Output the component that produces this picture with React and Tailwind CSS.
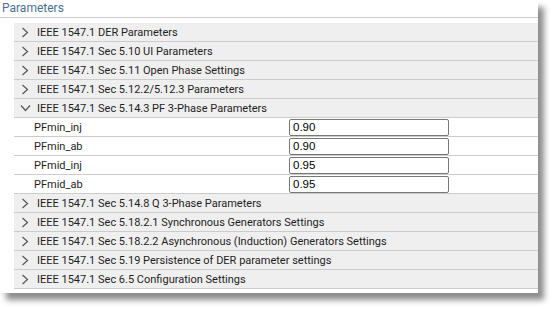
import React from "react";

const before = [
  "IEEE 1547.1 DER Parameters",
  "IEEE 1547.1 Sec 5.10 UI Parameters",
  "IEEE 1547.1 Sec 5.11 Open Phase Settings",
  "IEEE 1547.1 Sec 5.12.2/5.12.3 Parameters",
];
const after = [
  "IEEE 1547.1 Sec 5.14.8 Q 3-Phase Parameters",
  "IEEE 1547.1 Sec 5.18.2.1 Synchronous Generators Settings",
  "IEEE 1547.1 Sec 5.18.2.2 Asynchronous (Induction) Generators Settings",
  "IEEE 1547.1 Sec 5.19 Persistence of DER parameter settings",
  "IEEE 1547.1 Sec 6.5 Configuration Settings",
];
const params = [
  ["PFmin_inj", "0.90"],
  ["PFmin_ab", "0.90"],
  ["PFmid_inj", "0.95"],
  ["PFmid_ab", "0.95"],
];

function ChevronRight() {
  return (
    <svg width="8" height="11" viewBox="0 0 8 11" className="shrink-0">
      <path d="M1.5 1 L6.5 5.5 L1.5 10" fill="none" stroke="#555" strokeWidth="1.2" />
    </svg>
  );
}
function ChevronDown() {
  return (
    <svg width="11" height="8" viewBox="0 0 11 8" className="shrink-0">
      <path d="M1 1.5 L5.5 6.5 L10 1.5" fill="none" stroke="#555" strokeWidth="1.2" />
    </svg>
  );
}

function Header({ title, open }) {
  return (
    <div className="flex h-[19px] items-center border-b border-[#cccccc] bg-[#efefef] text-[11px] text-[#1e1e1e]">
      {open ? (
        <div className="ml-[6px] mr-[6px] flex w-[11px] justify-center">
          <ChevronDown />
        </div>
      ) : (
        <div className="ml-[7px] mr-[8px] flex w-[8px] justify-center">
          <ChevronRight />
        </div>
      )}
      <span className="whitespace-nowrap leading-none">{title}</span>
    </div>
  );
}

export default function App() {
  return (
    <div className="h-[309px] w-[554px] bg-white" style={{ fontFamily: "Roboto, 'Liberation Sans', sans-serif" }}>
      <div className="h-[293px] w-[538px] bg-white shadow-[6px_7px_6px_rgba(0,0,0,0.45)]">
        <div className="h-[18px] border-b border-[#cccccc] pl-[2px] pt-[1px] text-[12px] leading-[14px] text-[#4b6f94]">
          Parameters
        </div>
        <div className="ml-[14px] mt-[5px]">
          {before.map((t) => (
            <Header key={t} title={t} />
          ))}
          <Header title="IEEE 1547.1 Sec 5.14.3 PF 3-Phase Parameters" open />
          {params.map(([k, v]) => (
            <div key={k} className="flex h-[19px] items-center border-b border-[#cccccc] bg-white">
              <span className="w-[275px] shrink-0 pl-[20px] text-[11px] leading-none text-[#1e1e1e]">{k}</span>
              <input
                readOnly
                value={v}
                className="h-[17px] w-[160px] rounded-[2px] border border-[#777777] bg-white px-[3px] text-[11.5px] leading-none text-black outline-none"
                style={{ fontFamily: "'Liberation Sans', Arial, sans-serif" }}
              />
            </div>
          ))}
          {after.map((t) => (
            <Header key={t} title={t} />
          ))}
        </div>
      </div>
    </div>
  );
}
